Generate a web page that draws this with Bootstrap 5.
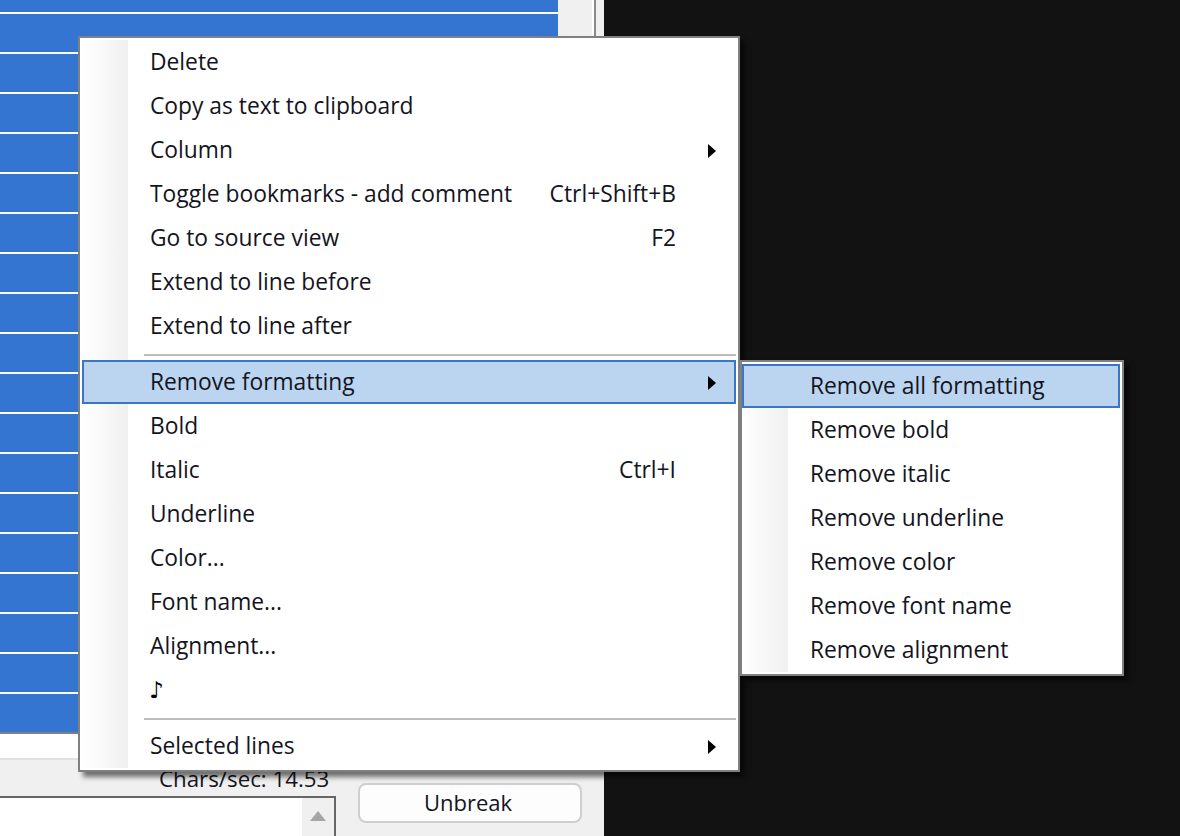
<!DOCTYPE html>
<html lang="en"><head><meta charset="utf-8"><title>Subtitle editor context menu</title>
<link href="https://cdn.jsdelivr.net/npm/bootstrap@5.3.0/dist/css/bootstrap.min.css" rel="stylesheet">
<style>
html,body{margin:0;height:836px;overflow:hidden;background:#121212}
body{font-family:"Open Sans","Liberation Sans",sans-serif;font-size:22px;color:#14141e}
.stage{width:1180px;height:836px;position:relative;background:#121212;overflow:hidden}
.app-win{width:604px;height:836px;background:#f0f0f0}
.upper{height:760px;border-bottom:2px solid #e2e2e2}
.grid-pane{width:558px;background:#fff}
.sub-row{height:40px;background:#3375d0;border-bottom:2px solid #fff}
.sub-row.first{height:14px}
.sub-row.last{height:38px;border-bottom:0}
.grid-end{height:2px;background:#7f7f7f}
.side-pane{width:46px}
.side-gap{width:34px}
.side-light{width:2px;background:#fff}
.side-rule{width:2px;background:#8a8a8a}
.lower{height:76px}
.memo{width:336px;height:40px;margin-top:36px;background:#fff;border-top:2px solid #666;border-right:2px solid #666}
.memo-bar{width:32px;background:#f0f0f0}
.memo-arrow{width:0;height:0;border-left:8px solid transparent;border-right:8px solid transparent;border-bottom:10px solid #a6a6a6;margin-top:13px}
.cps{position:absolute;left:159px;top:763px;line-height:32px;font-size:22.3px;white-space:nowrap}
.unbreak-btn{position:absolute;left:358px;top:783px;width:224px;height:40px;padding:0 4px 2px 0;background:#fdfdfd;border:2px solid #cfcfcf;border-radius:8px;font-size:22px;line-height:34px;color:#14141e}
.ctx{position:absolute;display:block;margin:0;padding:2px;min-width:0;background:#fff;border:2px solid #808080;border-radius:0;box-shadow:5px 5px 5px rgba(0,0,0,.55);font-size:22.8px}
.ctx-main{left:78px;top:36px;width:662px;height:736px}
.ctx-sub{left:740px;top:360px;width:384px;height:316px;padding-left:0}
.ctx-gutter{position:absolute;left:2px;top:2px;bottom:2px;width:46px;background:linear-gradient(90deg,#fff,#f0f0f0)}
.ctx-sub .ctx-gutter{left:0}
.ctx-item{position:relative;height:44px;padding:0 58px 0 66px;color:#14141e;line-height:40px;white-space:nowrap;border:2px solid transparent}
.ctx-sub .ctx-item{padding-right:8px}
.ctx-item.hot{background:#bbd5f1;border-color:#3a76c6}
.ctx-sep{position:relative;height:12px;margin-left:62px;padding-top:6px}
.ctx-sep i{display:block;height:2px;background:#bdbdbd}
.ctx-arrow{width:0;height:0;border-left:8px solid #000;border-top:7px solid transparent;border-bottom:7px solid transparent;position:absolute;right:18px;top:14px}
.note-glyph{font-family:"DejaVu Sans",sans-serif;color:#000;font-size:23px;margin-left:-1px}
</style></head>
<body>
<div class="stage">
  <div class="app-win">
    <div class="upper d-flex">
      <div class="grid-pane">
        <div class="sub-row first"></div>
        <div class="sub-row"></div><div class="sub-row"></div><div class="sub-row"></div><div class="sub-row"></div>
        <div class="sub-row"></div><div class="sub-row"></div><div class="sub-row"></div><div class="sub-row"></div>
        <div class="sub-row"></div><div class="sub-row"></div><div class="sub-row"></div><div class="sub-row"></div>
        <div class="sub-row"></div><div class="sub-row"></div><div class="sub-row"></div><div class="sub-row"></div>
        <div class="sub-row"></div>
        <div class="sub-row last"></div>
        <div class="grid-end"></div>
      </div>
      <div class="side-pane d-flex">
        <div class="side-gap"></div><div class="side-light"></div><div class="side-rule"></div>
      </div>
    </div>
    <div class="lower">
      <div class="memo d-flex justify-content-end">
        <div class="memo-bar d-flex justify-content-center"><div class="memo-arrow"></div></div>
      </div>
    </div>
  </div>
  <div class="cps">Chars/sec: 14.53</div>
  <button type="button" class="btn unbreak-btn">Unbreak</button>

  <div class="dropdown-menu show ctx ctx-main">
    <div class="ctx-gutter"></div>
    <div class="ctx-item d-flex justify-content-between"><span>Delete</span></div>
    <div class="ctx-item d-flex justify-content-between"><span>Copy as text to clipboard</span></div>
    <div class="ctx-item d-flex justify-content-between"><span>Column</span><b class="ctx-arrow"></b></div>
    <div class="ctx-item d-flex justify-content-between"><span>Toggle bookmarks - add comment</span><span>Ctrl+Shift+B</span></div>
    <div class="ctx-item d-flex justify-content-between"><span>Go to source view</span><span>F2</span></div>
    <div class="ctx-item d-flex justify-content-between"><span>Extend to line before</span></div>
    <div class="ctx-item d-flex justify-content-between"><span>Extend to line after</span></div>
    <div class="ctx-sep"><i></i></div>
    <div class="ctx-item hot d-flex justify-content-between"><span>Remove formatting</span><b class="ctx-arrow"></b></div>
    <div class="ctx-item d-flex justify-content-between"><span>Bold</span></div>
    <div class="ctx-item d-flex justify-content-between"><span>Italic</span><span>Ctrl+I</span></div>
    <div class="ctx-item d-flex justify-content-between"><span>Underline</span></div>
    <div class="ctx-item d-flex justify-content-between"><span>Color...</span></div>
    <div class="ctx-item d-flex justify-content-between"><span>Font name...</span></div>
    <div class="ctx-item d-flex justify-content-between"><span>Alignment...</span></div>
    <div class="ctx-item d-flex justify-content-between"><span class="note-glyph">♪</span></div>
    <div class="ctx-sep"><i></i></div>
    <div class="ctx-item d-flex justify-content-between"><span>Selected lines</span><b class="ctx-arrow"></b></div>
  </div>

  <div class="dropdown-menu show ctx ctx-sub">
    <div class="ctx-gutter"></div>
    <div class="ctx-item hot">Remove all formatting</div>
    <div class="ctx-item">Remove bold</div>
    <div class="ctx-item">Remove italic</div>
    <div class="ctx-item">Remove underline</div>
    <div class="ctx-item">Remove color</div>
    <div class="ctx-item">Remove font name</div>
    <div class="ctx-item">Remove alignment</div>
  </div>
</div>
<script src="https://cdn.jsdelivr.net/npm/bootstrap@5.3.0/dist/js/bootstrap.bundle.min.js"></script>
</body></html>
